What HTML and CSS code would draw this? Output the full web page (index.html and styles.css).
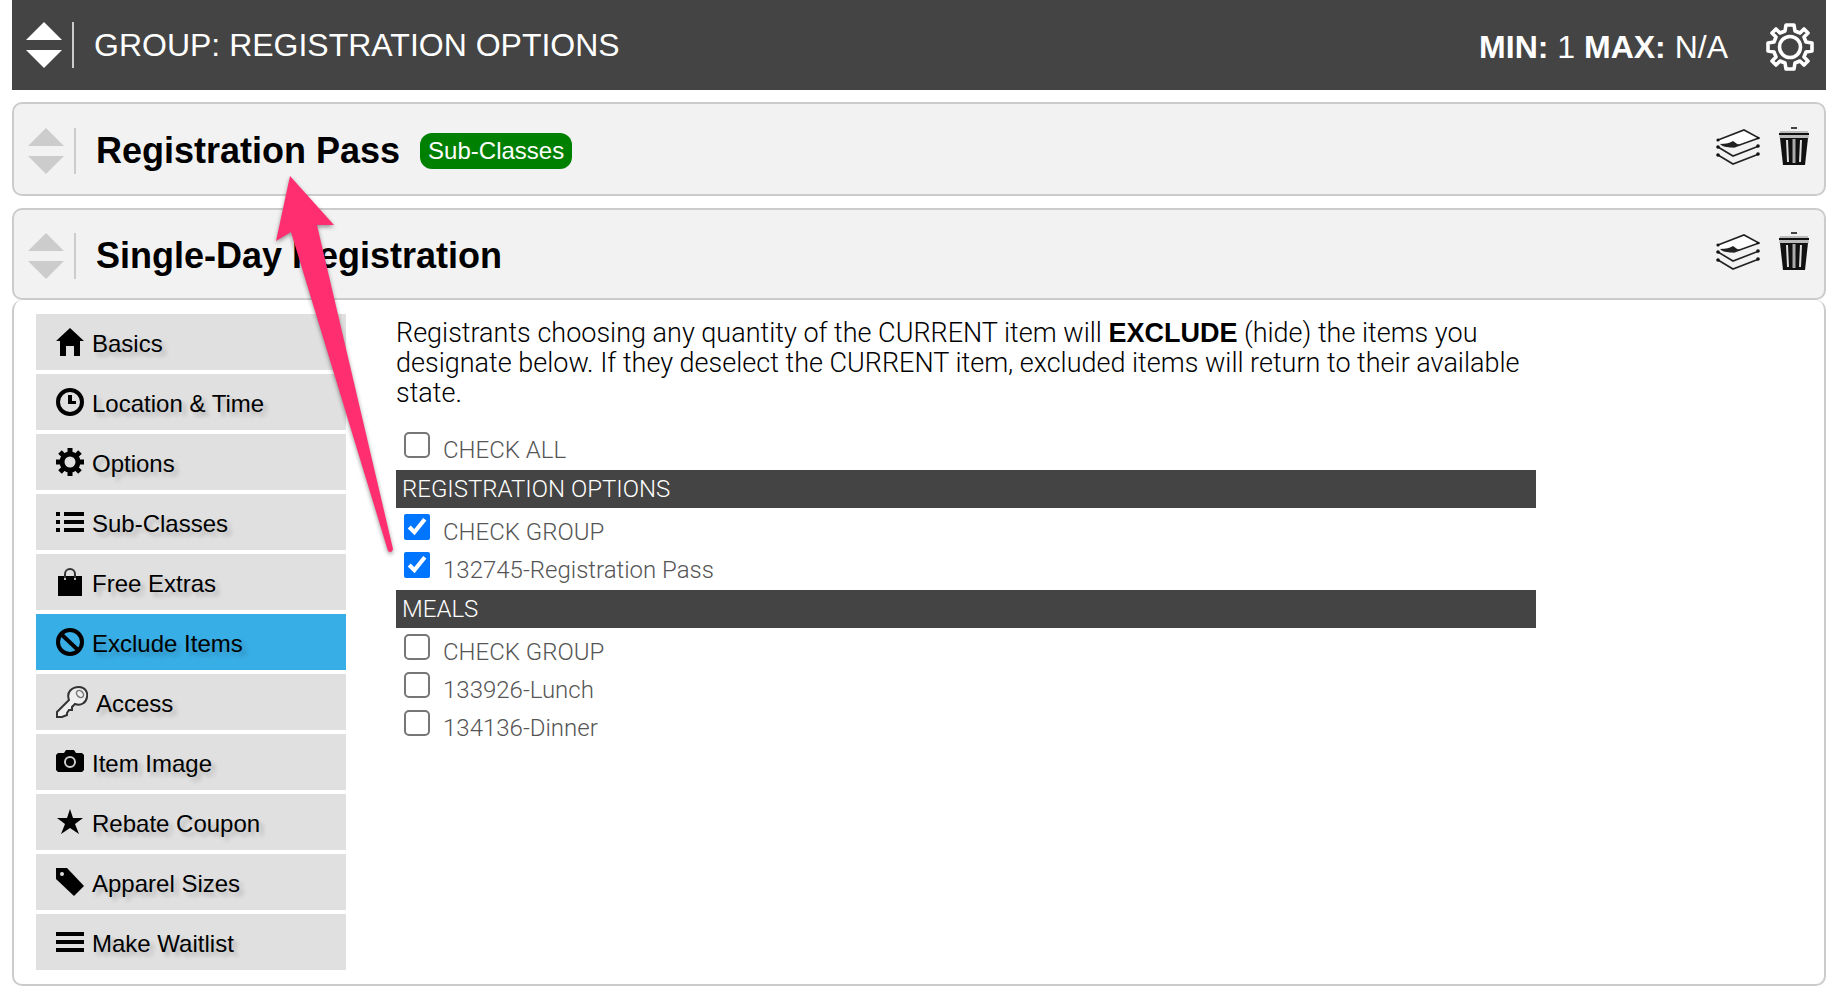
FILE: index.html
```
<!DOCTYPE html>
<html lang="en">
<head>
  <meta charset="UTF-8" />
  <meta name="viewport" content="width=device-width, initial-scale=1.0"/>
  <title>Registration Options</title>
  <link rel="stylesheet" href="styles.css">
</head>
<body>
  <!-- shared icons -->
  <svg class="sprite" aria-hidden="true">
    <symbol id="i-layers" viewBox="0 0 44 38">
      <path d="M2 12L28 2L42 10L18 19Q8 18 2 12Z" fill="#fff"/>
      <path d="M2 12L28 2L43 10L18 19L10 18" fill="none" stroke="#222" stroke-width="1.6"/>
      <path d="M4 16Q13 16 17 13Q20 16 25 17L17 19Q8 20 4 16Z" fill="#222"/>
      <path d="M2 19L17 28L43 18M2 27L17 36L43 26" fill="none" stroke="#222" stroke-width="1.6"/>
      <g fill="#111"><circle cx="2" cy="12" r="1.6"/><circle cx="2" cy="19" r="1.8"/><circle cx="2" cy="27" r="1.8"/><circle cx="42" cy="10" r="1.3"/><circle cx="42" cy="18" r="1.8"/><circle cx="42" cy="26" r="1.8"/></g>
    </symbol>
    <symbol id="i-trash" viewBox="0 0 32 40">
      <path d="M13 0h6v2h-6z" fill="#444"/>
      <path d="M2 4h28l1 7H1z" fill="#bbb"/>
      <path d="M1 6h30v2H1z" fill="#111"/>
      <path d="M2 11h28l-3 27H5z" fill="#111"/>
      <path d="M9 13l1 22M23 13l-1 22" stroke="#ddd" stroke-width="2"/>
      <path d="M16 12v24" stroke="#aaa" stroke-width="3"/>
    </symbol>
  </svg>

  <header class="group-bar">
    <button class="drag" aria-label="Move group"><span class="up"></span><span class="down"></span></button>
    <h1>GROUP: REGISTRATION OPTIONS</h1>
    <p class="limits"><b>MIN:</b> 1 <b>MAX:</b> N/A</p>
    <button class="icon-btn" aria-label="Group settings">
      <svg width="48" height="48" viewBox="0 0 48 48" fill="none" stroke="#fff" stroke-width="3.6" stroke-linejoin="round">
        <path d="M20 2H28L29 8L34 10L38 6L42 10L38 14L40 19L46 20V28L40 29L38 34L42 38L38 42L34 38L29 40L28 46H20L19 40L14 38L10 42L6 38L10 34L8 29L2 28V20L8 19L10 14L6 10L10 6L14 10L19 8Z"/>
        <circle cx="24" cy="24" r="10.5"/>
      </svg>
    </button>
  </header>

  <main>
    <section class="item">
      <button class="drag" aria-label="Move item"><span class="up"></span><span class="down"></span></button>
      <h2>Registration Pass</h2>
      <span class="badge">Sub-Classes</span>
      <div class="actions">
        <button class="icon-btn" aria-label="Copy item"><svg width="44" height="38"><use href="#i-layers"/></svg></button>
        <button class="icon-btn" aria-label="Delete item"><svg width="32" height="40"><use href="#i-trash"/></svg></button>
      </div>
    </section>

    <section class="item">
      <button class="drag" aria-label="Move item"><span class="up"></span><span class="down"></span></button>
      <h2>Single-Day Registration</h2>
      <div class="actions">
        <button class="icon-btn" aria-label="Copy item"><svg width="44" height="38"><use href="#i-layers"/></svg></button>
        <button class="icon-btn" aria-label="Delete item"><svg width="32" height="40"><use href="#i-trash"/></svg></button>
      </div>
    </section>

    <div class="panel">
      <nav class="tabs">
        <a href="#basics"><svg width="28" height="28" viewBox="0 0 28 28"><path d="M14 0L28 13H24V28H18V18H10V28H4V13H0Z"/></svg>Basics</a>
        <a href="#location"><svg width="28" height="28" viewBox="0 0 28 28"><circle cx="14" cy="14" r="12" fill="none" stroke="#000" stroke-width="4"/><path d="M12 7h4v6h4v3h-8z"/></svg>Location &amp; Time</a>
        <a href="#options"><svg width="28" height="28" viewBox="0 0 28 28"><g fill="none" stroke="#000"><circle cx="14" cy="14" r="8" stroke-width="5"/><path d="M14 0v5M14 23v5M0 14h5M23 14h5M4 4l4 4M20 20l4 4M4 24l4-4M20 8l4-4" stroke-width="5"/></g></svg>Options</a>
        <a href="#subclasses"><svg width="28" height="28" viewBox="0 0 28 28"><path d="M0 4h4v4H0zM8 4h20v4H8zM0 12h4v4H0zM8 12h20v4H8zM0 20h4v4H0zM8 20h20v4H8z"/></svg>Sub-Classes</a>
        <a href="#extras"><svg width="28" height="28" viewBox="0 0 28 28"><path d="M2 8h24v20H2z"/><path d="M9 11V6a5 5 0 0 1 10 0v5" fill="none" stroke="#333" stroke-width="2"/><path d="M8 10h2v2H8zM18 10h2v2h-2z" fill="#bbb"/></svg>Free Extras</a>
        <a href="#exclude" class="active"><svg width="28" height="28" viewBox="0 0 28 28"><g fill="none" stroke="#000" stroke-width="4"><circle cx="14" cy="14" r="12"/><path d="M5 6L22 22"/></g></svg>Exclude Items</a>
        <a href="#access"><svg width="32" height="32" viewBox="0 0 32 32"><path d="M13 14C10 6 16 1 23 1C29 1 32 6 31 11C30 17 25 20 19 18L16 21V24H13L11 27V29L6 31H1V26Z" fill="#eee" stroke="#333" stroke-width="2"/><ellipse cx="24" cy="8" rx="4" ry="3" transform="rotate(45 24 8)" fill="none" stroke="#777" stroke-width="1.5"/></svg>Access</a>
        <a href="#image"><svg width="28" height="28" viewBox="0 0 28 28"><path d="M2 5h6l2-3h8l2 3h6l2 2v15l-2 2H2l-2-2V7z"/><circle cx="14" cy="14" r="5" fill="none" stroke="#ccc" stroke-width="2"/></svg>Item Image</a>
        <a href="#coupon"><svg width="28" height="28" viewBox="0 0 28 28"><path d="M14 1L17 10H27L19 16L23 26L14 20L5 26L9 16L1 10H11Z"/></svg>Rebate Coupon</a>
        <a href="#sizes"><svg width="28" height="28" viewBox="0 0 28 28"><path d="M0 0H11L28 18L18 28L0 11Z"/><circle cx="6" cy="6" r="2" fill="#e0e0e0"/></svg>Apparel Sizes</a>
        <a href="#waitlist"><svg width="28" height="28" viewBox="0 0 28 28"><path d="M0 4h28v4H0zM0 12h28v4H0zM0 20h28v4H0z"/></svg>Make Waitlist</a>
      </nav>

      <form class="exclude">
        <p>Registrants choosing any quantity of the CURRENT item will <b>EXCLUDE</b> (hide) the items you designate below. If they deselect the CURRENT item, excluded items will return to their available state.</p>
        <div class="checks">
          <label><input type="checkbox">CHECK ALL</label>
        </div>
        <h3>REGISTRATION OPTIONS</h3>
        <div class="checks">
          <label><input type="checkbox" checked>CHECK GROUP</label>
          <label><input type="checkbox" checked>132745-Registration Pass</label>
        </div>
        <h3>MEALS</h3>
        <div class="checks">
          <label><input type="checkbox">CHECK GROUP</label>
          <label><input type="checkbox">133926-Lunch</label>
          <label><input type="checkbox">134136-Dinner</label>
        </div>
      </form>
    </div>
  </main>

  <!-- pointer from the checked item to its card -->
  <svg class="pointer" width="130" height="390" viewBox="270 170 130 390" aria-hidden="true">
    <path d="M290 176L334 225L317 225L393 549Q392 554 388 551L291 232L276 241Z" fill="#ff2e70"/>
  </svg>
</body>
</html>
```
FILE: styles.css
```
* { margin: 0; padding: 0; box-sizing: border-box; }
body { position: relative; padding: 0 10px 10px 12px; font-family: "Liberation Sans", Arial, sans-serif; font-size: 24px; color: #000; background: #fff; }
button { background: none; border: none; cursor: pointer; }
svg { display: block; }
.sprite { position: absolute; width: 0; height: 0; }

.group-bar { display: flex; align-items: center; height: 90px; padding: 0 12px 0 14px; background: #444; color: #fff; }
.group-bar h1 { flex: 1; font-size: 32px; font-weight: normal; }
.limits { margin-right: 38px; padding-top: 4px; font-size: 32px; }
.group-bar .icon-btn { padding-top: 4px; }

.drag { display: flex; flex-direction: column; gap: 10px; width: 48px; margin-right: 20px; border-right: 2px solid #ccc; color: #ccc; }
.group-bar .drag { color: #fff; }
.up, .down { border-left: 18px solid transparent; border-right: 18px solid transparent; width: 36px; }
.up { border-bottom: 18px solid; }
.down { border-top: 18px solid; }

.item { display: flex; align-items: center; margin-top: 12px; padding: 22px 14px 18px; border: 2px solid #ccc; border-radius: 10px; background: #f2f2f2; }
.item h2 { font-size: 36px; line-height: 48px; }
.badge { margin: 7px 0 7px 20px; padding: 0 8px; border-radius: 12px; background: green; color: #fff; line-height: 36px; }
.actions { display: flex; align-items: center; gap: 18px; margin-left: auto; padding-bottom: 8px; }

.panel { display: flex; align-items: flex-start; gap: 50px; padding: 14px 22px; border: 2px solid #ccc; border-top: none; border-radius: 10px; }
.tabs { display: flex; flex-direction: column; gap: 4px; width: 310px; }
.tabs a { display: flex; align-items: center; gap: 8px; height: 56px; padding: 4px 20px 0; background: #e0e0e0; color: #000; text-decoration: none; text-shadow: 4px 4px 4px rgba(0, 0, 0, .2); }
.tabs svg { margin-bottom: 4px; }
.tabs a.active { background: #38aee6; }

.exclude { width: 1140px; font-family: Roboto, "Liberation Sans", sans-serif; font-weight: 300; }
.exclude p { padding: 4px 0 18px; font-size: 27px; line-height: 30px; }
.exclude b { font-family: "Liberation Sans", Arial, sans-serif; font-weight: 700; line-height: 1; }
.exclude h3 { padding: 0 6px; background: #444; color: #fff; font-size: 24px; font-weight: 300; line-height: 38px; }
.checks { padding-bottom: 6px; color: #555; }
.checks label { display: flex; gap: 13px; height: 38px; padding: 6px 8px 0; line-height: 36px; }
.checks input { width: 26px; height: 26px; accent-color: #0075ff; }
.checks input:not(:checked) { appearance: none; border: 2px solid #767676; border-radius: 5px; }

.pointer { position: absolute; left: 270px; top: 170px; filter: drop-shadow(0 2px 2px rgba(0, 0, 0, .4)); pointer-events: none; }
```
